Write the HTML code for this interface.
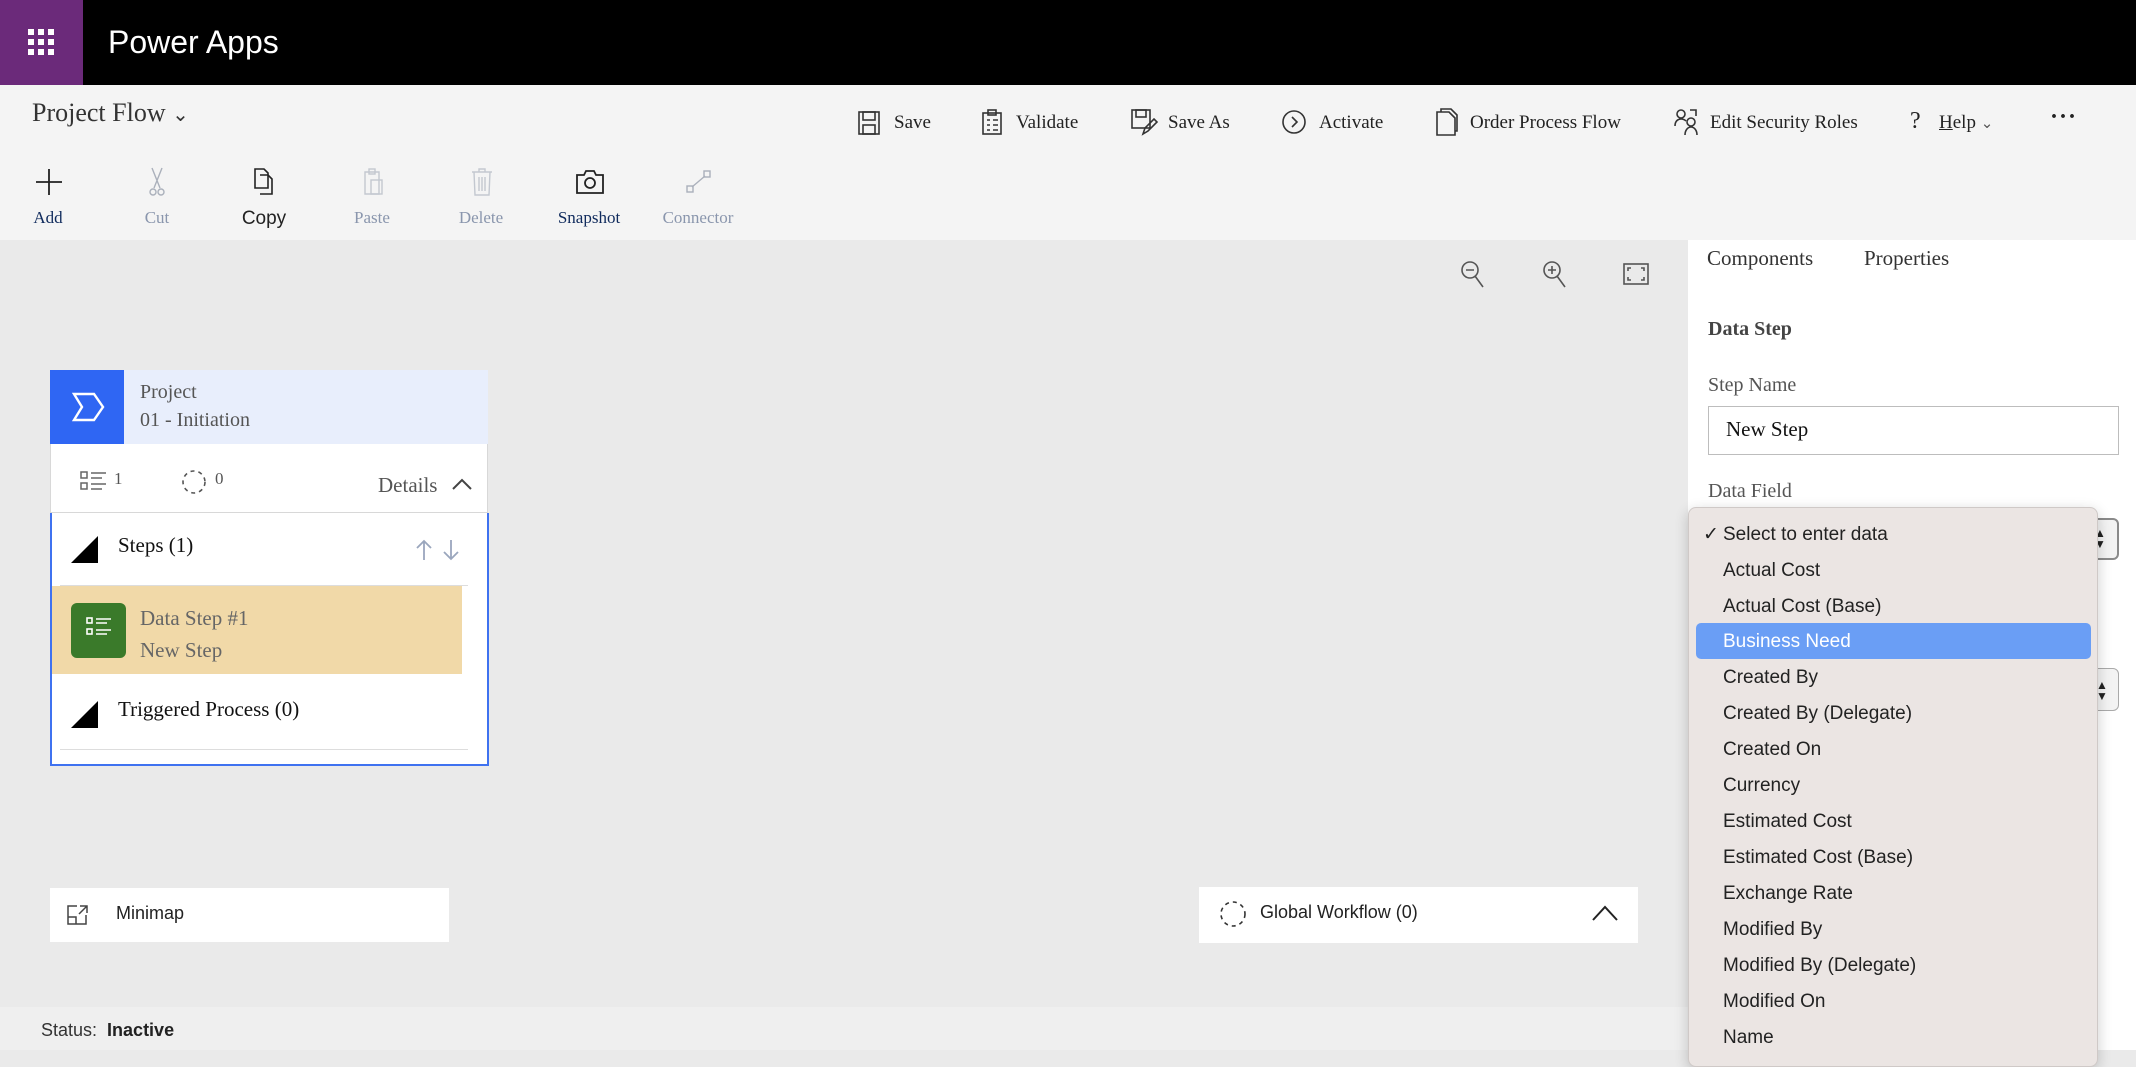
<!DOCTYPE html>
<html><head><meta charset="utf-8"><style>
*{margin:0;padding:0;box-sizing:border-box}
body{width:2136px;height:1050px;overflow:hidden;position:relative;background:#eaeaea;font-family:"Liberation Serif",serif;color:#222}
.a{position:absolute}
.top{left:0;top:0;width:2136px;height:85px;background:#000}
.waf{left:0;top:0;width:83px;height:85px;background:#6b2a7a}
.cmd{left:0;top:85px;width:2136px;height:155px;background:#f4f4f4}
.c{font-size:19px;color:#222;line-height:24px}
.tl{font-size:17px;color:#8a96ad;text-align:center;width:120px;line-height:20px}
.right{left:1688px;top:240px;width:448px;height:810px;background:#fff}
.status{left:0;top:1007px;width:1688px;height:43px;background:#efefef}
.dd{left:1688px;top:507px;width:410px;height:560px;background:#ebe5e3;border:1px solid #cfc9c7;border-radius:8px;box-shadow:0 4px 14px rgba(0,0,0,.2);font-family:"Liberation Sans",sans-serif;font-size:19px;color:#222}
.dd div{position:absolute;left:34px;line-height:36px;height:36px}
svg{position:absolute;overflow:visible}
</style></head><body>
<div class="a top"></div>
<div class="a waf"></div>
<svg style="left:28px;top:29px" width="27" height="27" fill="#fff"><rect x="0" y="0" width="6" height="6"/><rect x="10" y="0" width="6" height="6"/><rect x="20" y="0" width="6" height="6"/><rect x="0" y="10" width="6" height="6"/><rect x="10" y="10" width="6" height="6"/><rect x="20" y="10" width="6" height="6"/><rect x="0" y="20" width="6" height="6"/><rect x="10" y="20" width="6" height="6"/><rect x="20" y="20" width="6" height="6"/></svg>
<div class="a" style="left:108px;top:20px;color:#fff;font-family:'Liberation Sans',sans-serif;font-size:32px;line-height:44px">Power Apps</div>
<div class="a cmd"></div>
<div class="a" style="left:32px;top:97px;font-size:26px;line-height:32px;color:#333">Project Flow <span style="font-size:20px">&#8964;</span></div>

<svg style="left:858px;top:111px" width="24" height="24" fill="none" stroke="#333" stroke-width="1.6"><rect x="1" y="1" width="20" height="22"/><rect x="5" y="1" width="12" height="8"/><rect x="5" y="14" width="12" height="9"/></svg>
<div class="a c" style="left:894px;top:111px">Save</div>
<svg style="left:982px;top:109px" width="22" height="26" fill="none" stroke="#333" stroke-width="1.6"><rect x="1" y="4" width="18" height="21"/><rect x="6" y="1" width="8" height="5"/><path d="M5 11h3M11 11h5M5 16h3M11 16h5M5 21h3M11 21h5"/></svg>
<div class="a c" style="left:1016px;top:111px">Validate</div>
<svg style="left:1131px;top:109px" width="26" height="26" fill="none" stroke="#333" stroke-width="1.6"><rect x="1" y="1" width="18" height="18"/><rect x="5" y="1" width="10" height="7"/><path d="M12 25l2-6 9-9 3 3-9 9z"/></svg>
<div class="a c" style="left:1168px;top:111px">Save As</div>
<svg style="left:1282px;top:110px" width="24" height="24" fill="none" stroke="#333" stroke-width="1.6"><circle cx="12" cy="12" r="11"/><path d="M10 7l5 5-5 5"/></svg>
<div class="a c" style="left:1319px;top:111px">Activate</div>
<svg style="left:1436px;top:108px" width="22" height="28" fill="none" stroke="#333" stroke-width="1.6"><path d="M1 4h12l6 6v17H1z"/><path d="M5 4V1h10l6 6v16h-2"/></svg>
<div class="a c" style="left:1470px;top:111px">Order Process Flow</div>
<svg style="left:1674px;top:108px" width="26" height="28" fill="none" stroke="#333" stroke-width="1.6"><circle cx="7" cy="6" r="4"/><path d="M1 18c0-5 3-7 6-7s4 1 5 2"/><circle cx="17" cy="14" r="4"/><path d="M11 27c0-5 3-8 6-8s6 3 6 8"/><path d="M16 2h6v6"/></svg>
<div class="a c" style="left:1710px;top:111px">Edit Security Roles</div>
<div class="a c" style="left:1910px;top:109px;font-size:24px">?</div>
<div class="a c" style="left:1939px;top:111px"><u>H</u>elp <span style="font-size:15px;color:#555">&#8964;</span></div>
<div class="a" style="left:2050px;top:104px;font-size:24px;font-weight:bold;letter-spacing:1px">&middot;&middot;&middot;</div>

<svg style="left:36px;top:169px" width="26" height="26" stroke="#222" stroke-width="1.8"><path d="M13 0v26M0 13h26"/></svg>
<div class="a tl" style="left:-12px;top:208px;color:#0f2a5c">Add</div>
<svg style="left:149px;top:168px" width="16" height="28" fill="none" stroke="#aab0bb" stroke-width="1.4"><path d="M3 0l8 20M13 0L5 20"/><circle cx="4" cy="24" r="3"/><circle cx="12" cy="24" r="3"/></svg>
<div class="a tl" style="left:97px;top:208px">Cut</div>
<svg style="left:254px;top:168px" width="20" height="28" fill="none" stroke="#222" stroke-width="1.6"><path d="M1 1h9l4 4v15H1z"/><path d="M6 7h8l4 4v15H6"/></svg>
<div class="a tl" style="left:204px;top:209px;color:#222;font-family:'Liberation Sans',sans-serif;font-size:19px">Copy</div>
<svg style="left:362px;top:168px" width="22" height="28" fill="none" stroke="#c3c8d0" stroke-width="1.4"><path d="M3 4h14v22H3z"/><rect x="7" y="1" width="6" height="5"/><rect x="9" y="12" width="11" height="14"/></svg>
<div class="a tl" style="left:312px;top:208px">Paste</div>
<svg style="left:471px;top:168px" width="22" height="28" fill="none" stroke="#c3c8d0" stroke-width="1.4"><path d="M1 4h20M8 4V1h6v3M3 4l1 23h14l1-23M8 9v14M11 9v14M14 9v14"/></svg>
<div class="a tl" style="left:421px;top:208px">Delete</div>
<svg style="left:576px;top:170px" width="28" height="24" fill="none" stroke="#222" stroke-width="1.8"><path d="M1 5h7l2-4h8l2 4h7v18H1z"/><circle cx="14" cy="13" r="5"/></svg>
<div class="a tl" style="left:529px;top:208px;color:#0f2a5c">Snapshot</div>
<svg style="left:686px;top:170px" width="26" height="24" fill="none" stroke="#aab0bb" stroke-width="1.4"><rect x="1" y="16" width="6" height="6"/><rect x="18" y="1" width="6" height="6"/><path d="M6 17L19 6"/></svg>
<div class="a tl" style="left:638px;top:208px">Connector</div>

<svg style="left:1460px;top:260px" width="26" height="30" fill="none" stroke="#555" stroke-width="1.6"><circle cx="10" cy="10" r="8"/><path d="M6 10h8M15 16l8 11"/></svg>
<svg style="left:1542px;top:260px" width="26" height="30" fill="none" stroke="#555" stroke-width="1.6"><circle cx="10" cy="10" r="8"/><path d="M6 10h8M10 6v8M15 16l8 11"/></svg>
<svg style="left:1623px;top:263px" width="26" height="22" fill="none" stroke="#555" stroke-width="1.6"><rect x="1" y="1" width="24" height="20"/><path d="M5 8V5h3M18 5h3v3M21 14v3h-3M8 17H5v-3"/></svg>

<div class="a right"></div>
<div class="a" style="left:1707px;top:246px;font-size:21px;color:#333">Components</div>
<div class="a" style="left:1864px;top:246px;font-size:21px;color:#333">Properties</div>
<div class="a" style="left:1708px;top:318px;font-size:20px;font-weight:bold;color:#444">Data Step</div>
<div class="a" style="left:1708px;top:374px;font-size:20px;color:#555">Step Name</div>
<div class="a" style="left:1708px;top:406px;width:411px;height:49px;border:1px solid #bdbdbd;background:#fff;font-size:21px;color:#111;padding:10px 0 0 17px">New Step</div>
<div class="a" style="left:1708px;top:480px;font-size:20px;color:#555">Data Field</div>
<div class="a" style="left:1708px;top:518px;width:411px;height:42px;border:2px solid #8a8a8a;border-radius:6px;background:#f3f3f3"></div>
<div class="a" style="left:2094px;top:528px;font-size:12px;line-height:11px;color:#222">&#9650;<br>&#9660;</div>
<div class="a" style="left:1708px;top:668px;width:411px;height:43px;border:1px solid #aaa;border-radius:6px;background:#f3f3f3"></div>
<div class="a" style="left:2096px;top:680px;font-size:12px;line-height:11px;color:#222">&#9650;<br>&#9660;</div>

<div class="a" style="left:50px;top:370px;width:438px;height:395px;background:#fff;border:1px solid #d8d8d8"></div>
<div class="a" style="left:50px;top:370px;width:438px;height:74px;background:#e8eefc"></div>
<div class="a" style="left:50px;top:370px;width:74px;height:74px;background:#2f66f3"></div>
<svg style="left:73px;top:393px" width="32" height="28" fill="none" stroke="#fff" stroke-width="2.4"><path d="M1 1h20l9 13-9 13H1l8-13z"/></svg>
<div class="a" style="left:140px;top:378px;font-size:20px;color:#555;line-height:28px">Project<br>01 - Initiation</div>
<svg style="left:80px;top:471px" width="27" height="20" fill="none" stroke="#666" stroke-width="1.5"><rect x="1" y="1" width="6" height="6"/><rect x="1" y="12" width="6" height="6"/><path d="M11 2h15M11 7h11M11 13h15M11 18h11"/></svg>
<div class="a" style="left:114px;top:469px;font-size:17px;color:#555">1</div>
<svg style="left:181px;top:469px" width="26" height="26" fill="none" stroke="#555" stroke-width="1.6" stroke-dasharray="4 4"><circle cx="13" cy="13" r="11"/></svg>
<div class="a" style="left:215px;top:469px;font-size:17px;color:#555">0</div>
<div class="a" style="left:378px;top:473px;font-size:21px;color:#555">Details</div>
<svg style="left:452px;top:478px" width="20" height="12" fill="none" stroke="#444" stroke-width="2"><path d="M1 11l9-9 9 9"/></svg>
<div class="a" style="left:50px;top:512px;width:438px;height:1px;background:#d8d8d8"></div>
<div class="a" style="left:50px;top:513px;width:439px;height:253px;border:2px solid #3f72f0;border-top:none"></div>
<svg style="left:71px;top:536px" width="28" height="27"><path d="M0 27L27 0v27z" fill="#000"/></svg>
<div class="a" style="left:118px;top:533px;font-size:21px;color:#111">Steps (1)</div>
<svg style="left:415px;top:539px" width="46" height="22" fill="none" stroke="#9aa6bd" stroke-width="1.8"><path d="M9 21V2M2 9l7-7 7 7M36 1v19M29 13l7 7 7-7"/></svg>
<div class="a" style="left:60px;top:585px;width:408px;height:1px;background:#ddd"></div>
<div class="a" style="left:52px;top:586px;width:410px;height:88px;background:#f1d9a8"></div>
<div class="a" style="left:71px;top:603px;width:55px;height:55px;background:#3a7a2a;border-radius:6px"></div>
<svg style="left:86px;top:617px" width="27" height="20" fill="none" stroke="#fff" stroke-width="1.6"><rect x="1" y="1" width="5" height="5"/><rect x="1" y="12" width="5" height="5"/><path d="M10 2h15M10 6h11M10 13h15M10 17h11"/></svg>
<div class="a" style="left:140px;top:602px;font-size:21px;color:#666;line-height:32px">Data Step #1<br>New Step</div>
<svg style="left:71px;top:701px" width="28" height="27"><path d="M0 27L27 0v27z" fill="#000"/></svg>
<div class="a" style="left:118px;top:697px;font-size:21px;color:#111">Triggered Process (0)</div>
<div class="a" style="left:60px;top:749px;width:408px;height:1px;background:#ddd"></div>

<div class="a" style="left:50px;top:888px;width:399px;height:54px;background:#fff"></div>
<svg style="left:67px;top:905px" width="22" height="20" fill="none" stroke="#444" stroke-width="1.5"><path d="M10 1H1v18h18v-9M1 12h8v7M13 1h7v7M20 1l-8 8"/></svg>
<div class="a" style="left:116px;top:903px;font-family:'Liberation Sans',sans-serif;font-size:18px;color:#222">Minimap</div>
<div class="a" style="left:1199px;top:887px;width:439px;height:56px;background:#fff"></div>
<svg style="left:1219px;top:900px" width="28" height="28" fill="none" stroke="#333" stroke-width="1.6" stroke-dasharray="4 4"><circle cx="14" cy="14" r="12"/></svg>
<div class="a" style="left:1260px;top:902px;font-family:'Liberation Sans',sans-serif;font-size:18px;color:#222">Global Workflow (0)</div>
<svg style="left:1592px;top:905px" width="26" height="16" fill="none" stroke="#222" stroke-width="2"><path d="M1 15L13 2l12 13"/></svg>

<div class="a status"></div>
<div class="a" style="left:41px;top:1020px;font-family:'Liberation Sans',sans-serif;font-size:18px;color:#333">Status:&nbsp; <b style="color:#222">Inactive</b></div>

<div class="a dd">
<div style="left:14px;top:9px">&#10003;</div>
<div style="top:9px">Select to enter data</div>
<div style="top:45px">Actual Cost</div>
<div style="top:81px">Actual Cost (Base)</div>
<div style="left:7px;top:115px;width:395px;height:36px;background:#6a9ef5;border-radius:5px"></div>
<div style="top:116px;color:#fff">Business Need</div>
<div style="top:152px">Created By</div>
<div style="top:188px">Created By (Delegate)</div>
<div style="top:224px">Created On</div>
<div style="top:260px">Currency</div>
<div style="top:296px">Estimated Cost</div>
<div style="top:332px">Estimated Cost (Base)</div>
<div style="top:368px">Exchange Rate</div>
<div style="top:404px">Modified By</div>
<div style="top:440px">Modified By (Delegate)</div>
<div style="top:476px">Modified On</div>
<div style="top:512px">Name</div>
</div>
</body></html>
